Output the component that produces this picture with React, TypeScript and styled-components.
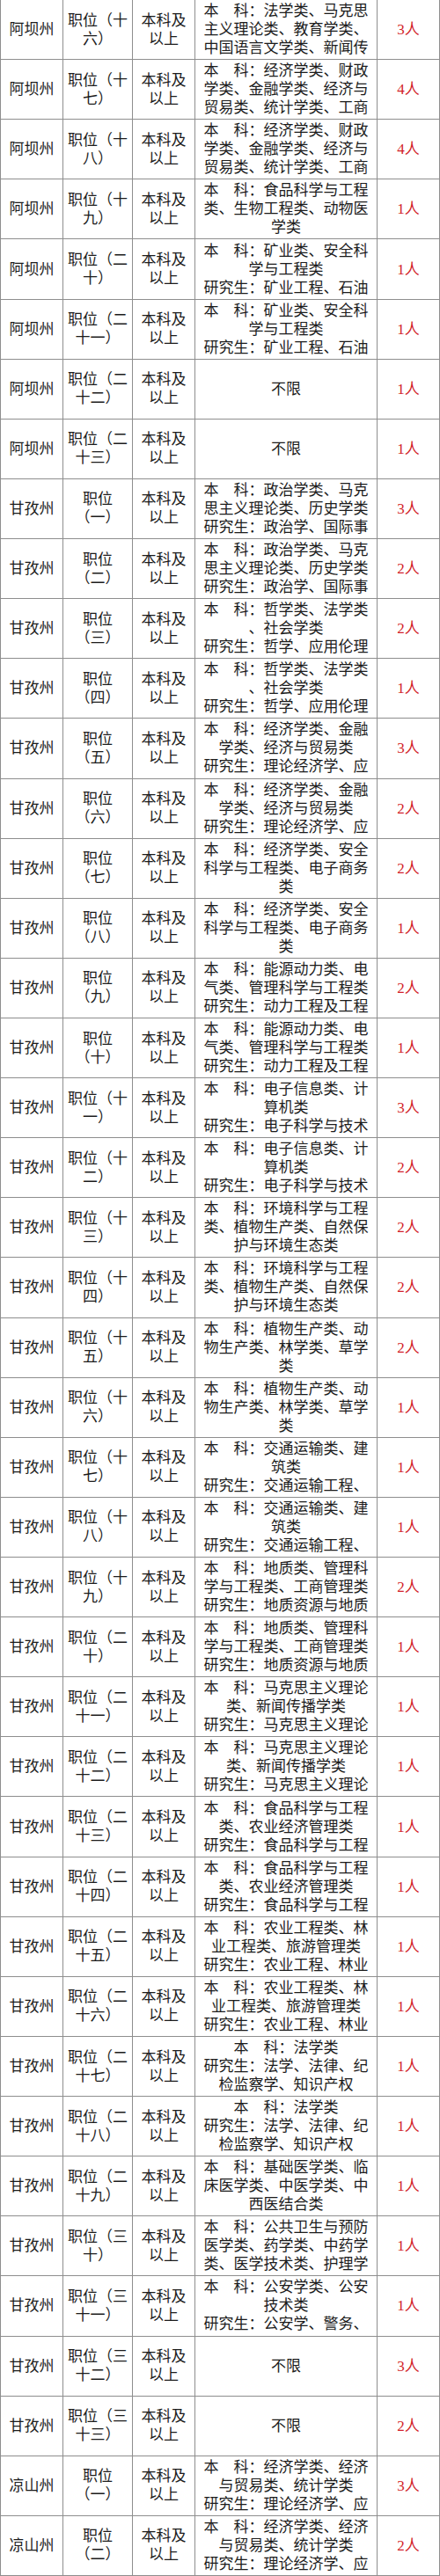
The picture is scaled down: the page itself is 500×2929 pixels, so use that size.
import React from "react";
import styled, { createGlobalStyle } from "styled-components";

const GlobalStyle = createGlobalStyle`
  html, body {
    margin: 0;
    padding: 0;
    background: #ffffff;
  }
  body {
    font-family: "Liberation Serif", "Noto Sans CJK SC", serif;
    color: #1c1c1c;
  }
`;

const LINE = "#8e8e8e";

const Table = styled.div<{ $rows: number }>`
  display: grid;
  grid-template-columns: 72px 79px 71px 207px 71px;
  grid-template-rows: repeat(${(p) => p.$rows}, 1fr);
  width: 500px;
  height: 2929px;
`;

const Cell = styled.div<{ $first?: boolean }>`
  display: flex;
  flex-direction: column;
  align-items: center;
  justify-content: center;
  box-sizing: border-box;
  overflow: hidden;
  text-align: center;
  white-space: nowrap;
  font-size: 17px;
  line-height: 21px;
  border-right: 1px solid ${LINE};
  border-bottom: 1px solid ${LINE};
  border-left: ${(p) => (p.$first ? `1px solid ${LINE}` : "none")};
`;

const CountCell = styled(Cell)`
  color: #d21f2b;
`;

const Line = styled.span`
  display: block;
`;

interface Post {
  region: string;
  pos: string;
  major: string;
  count: string;
}

// "|" marks a line break, same as the printed table
const EDU = "本科及|以上";

const abPosts: Post[] = [
  { region: "阿坝州", pos: "职位（十|六）", major: "本　科：法学类、马克思|主义理论类、教育学类、|中国语言文学类、新闻传", count: "3人" },
  { region: "阿坝州", pos: "职位（十|七）", major: "本　科：经济学类、财政|学类、金融学类、经济与|贸易类、统计学类、工商", count: "4人" },
  { region: "阿坝州", pos: "职位（十|八）", major: "本　科：经济学类、财政|学类、金融学类、经济与|贸易类、统计学类、工商", count: "4人" },
  { region: "阿坝州", pos: "职位（十|九）", major: "本　科：食品科学与工程|类、生物工程类、动物医|学类", count: "1人" },
  { region: "阿坝州", pos: "职位（二|十）", major: "本　科：矿业类、安全科|学与工程类|研究生：矿业工程、石油", count: "1人" },
  { region: "阿坝州", pos: "职位（二|十一）", major: "本　科：矿业类、安全科|学与工程类|研究生：矿业工程、石油", count: "1人" },
  { region: "阿坝州", pos: "职位（二|十二）", major: "不限", count: "1人" },
  { region: "阿坝州", pos: "职位（二|十三）", major: "不限", count: "1人" },
];

const gzRows: [string, string, string][] = [
  ["职位|（一）", "本　科：政治学类、马克|思主义理论类、历史学类|研究生：政治学、国际事", "3人"],
  ["职位|（二）", "本　科：政治学类、马克|思主义理论类、历史学类|研究生：政治学、国际事", "2人"],
  ["职位|（三）", "本　科：哲学类、法学类|、社会学类|研究生：哲学、应用伦理", "2人"],
  ["职位|（四）", "本　科：哲学类、法学类|、社会学类|研究生：哲学、应用伦理", "1人"],
  ["职位|（五）", "本　科：经济学类、金融|学类、经济与贸易类|研究生：理论经济学、应", "3人"],
  ["职位|（六）", "本　科：经济学类、金融|学类、经济与贸易类|研究生：理论经济学、应", "2人"],
  ["职位|（七）", "本　科：经济学类、安全|科学与工程类、电子商务|类", "2人"],
  ["职位|（八）", "本　科：经济学类、安全|科学与工程类、电子商务|类", "1人"],
  ["职位|（九）", "本　科：能源动力类、电|气类、管理科学与工程类|研究生：动力工程及工程", "2人"],
  ["职位|（十）", "本　科：能源动力类、电|气类、管理科学与工程类|研究生：动力工程及工程", "1人"],
  ["职位（十|一）", "本　科：电子信息类、计|算机类|研究生：电子科学与技术", "3人"],
  ["职位（十|二）", "本　科：电子信息类、计|算机类|研究生：电子科学与技术", "2人"],
  ["职位（十|三）", "本　科：环境科学与工程|类、植物生产类、自然保|护与环境生态类", "2人"],
  ["职位（十|四）", "本　科：环境科学与工程|类、植物生产类、自然保|护与环境生态类", "2人"],
  ["职位（十|五）", "本　科：植物生产类、动|物生产类、林学类、草学|类", "2人"],
  ["职位（十|六）", "本　科：植物生产类、动|物生产类、林学类、草学|类", "1人"],
  ["职位（十|七）", "本　科：交通运输类、建|筑类|研究生：交通运输工程、", "1人"],
  ["职位（十|八）", "本　科：交通运输类、建|筑类|研究生：交通运输工程、", "1人"],
  ["职位（十|九）", "本　科：地质类、管理科|学与工程类、工商管理类|研究生：地质资源与地质", "2人"],
  ["职位（二|十）", "本　科：地质类、管理科|学与工程类、工商管理类|研究生：地质资源与地质", "1人"],
  ["职位（二|十一）", "本　科：马克思主义理论|类、新闻传播学类|研究生：马克思主义理论", "1人"],
  ["职位（二|十二）", "本　科：马克思主义理论|类、新闻传播学类|研究生：马克思主义理论", "1人"],
  ["职位（二|十三）", "本　科：食品科学与工程|类、农业经济管理类|研究生：食品科学与工程", "1人"],
  ["职位（二|十四）", "本　科：食品科学与工程|类、农业经济管理类|研究生：食品科学与工程", "1人"],
  ["职位（二|十五）", "本　科：农业工程类、林|业工程类、旅游管理类|研究生：农业工程、林业", "1人"],
  ["职位（二|十六）", "本　科：农业工程类、林|业工程类、旅游管理类|研究生：农业工程、林业", "1人"],
  ["职位（二|十七）", "本　科：法学类|研究生：法学、法律、纪|检监察学、知识产权", "1人"],
  ["职位（二|十八）", "本　科：法学类|研究生：法学、法律、纪|检监察学、知识产权", "1人"],
  ["职位（二|十九）", "本　科：基础医学类、临|床医学类、中医学类、中|西医结合类", "1人"],
  ["职位（三|十）", "本　科：公共卫生与预防|医学类、药学类、中药学|类、医学技术类、护理学", "1人"],
  ["职位（三|十一）", "本　科：公安学类、公安|技术类|研究生：公安学、警务、", "1人"],
  ["职位（三|十二）", "不限", "3人"],
  ["职位（三|十三）", "不限", "2人"],
];

const lsRows: [string, string, string][] = [
  ["职位|（一）", "本　科：经济学类、经济|与贸易类、统计学类|研究生：理论经济学、应", "3人"],
  ["职位|（二）", "本　科：经济学类、经济|与贸易类、统计学类|研究生：理论经济学、应", "2人"],
];

const posts: Post[] = [
  ...abPosts,
  ...gzRows.map(([pos, major, count]) => ({ region: "甘孜州", pos, major, count })),
  ...lsRows.map(([pos, major, count]) => ({ region: "凉山州", pos, major, count })),
];

const Lines: React.FC<{ text: string }> = ({ text }) => (
  <>
    {text.split("|").map((t, i) => (
      <Line key={i}>{t}</Line>
    ))}
  </>
);

const App: React.FC = () => {
  return (
    <>
      <GlobalStyle />
      <Table $rows={posts.length}>
        {posts.map((p, i) => (
          <React.Fragment key={i}>
            <Cell $first>{p.region}</Cell>
            <Cell>
              <Lines text={p.pos} />
            </Cell>
            <Cell>
              <Lines text={EDU} />
            </Cell>
            <Cell>
              <Lines text={p.major} />
            </Cell>
            <CountCell>{p.count}</CountCell>
          </React.Fragment>
        ))}
      </Table>
    </>
  );
};

export default App;
